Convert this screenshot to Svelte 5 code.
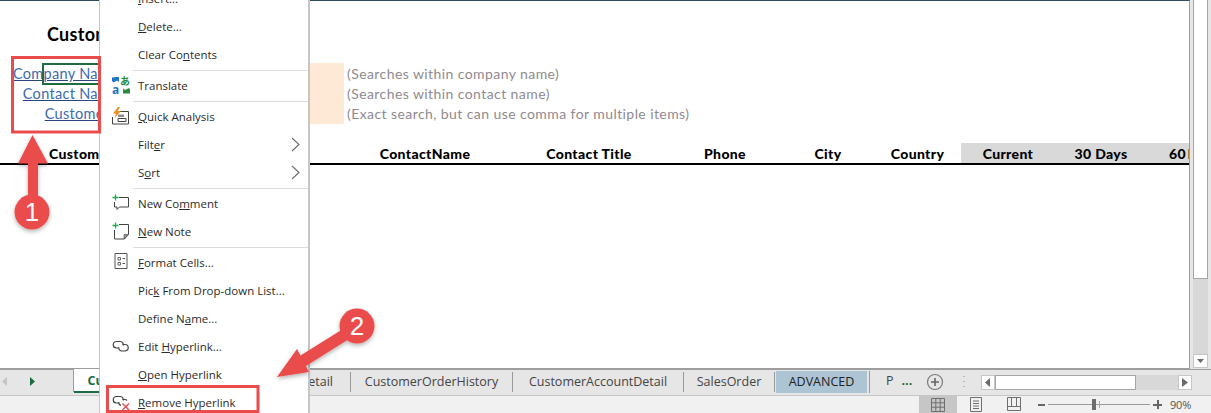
<script>
  const notes = [
    ['Company Name', '(Searches within company name)'],
    ['Contact Name', '(Searches within contact name)'],
    ['Customer#', '(Exact search, but can use comma for multiple items)']
  ];
  const heads = ['CustomerID', 'ContactName', 'Contact Title', 'Phone', 'City', 'Country'];
  const aged = ['Current', '30 Days', '60 Days'];
</script>

<div class="app">
  <main class="sheet">
    <h1 class="title">Customer Search</h1>
    <section class="filters">
      {#each notes as n, i}
        <a class="label" href="#top">{n[0]}</a>
        {#if i === 0}<div class="peach"></div>{/if}
        <span class="note">{n[1]}</span>
      {/each}
      <div class="selected"></div>
    </section>
    <section class="head">
      {#each heads as h}<b>{h}</b>{/each}
      {#each aged as h}<b class="aged">{h}</b>{/each}
    </section>
  </main>

  <aside class="vscroll">
    <div class="vthumb"></div>
    <div class="vtrack"></div>
    <div class="vbtn"><svg width="9" height="6" viewBox="0 0 9 6"><path d="M1 1h7L4.500 5z" fill="#6a6a6a"/></svg></div>
  </aside>

  <nav class="tabs">
    <div class="nav">
      <svg width="74" height="22" viewBox="0 0 74 22"><path d="M7 7v9L2 11.500z" fill="#c4c4c4"/><path d="M30 7v9l5-4.500z" fill="#1d6b41"/></svg>
    </div>
    <div class="tab active">CustomerSearch</div>
    <div class="tab detail">CustomerDetail</div>
    <div class="tab">CustomerOrderHistory</div>
    <div class="tab">CustomerAccountDetail</div>
    <div class="tab">SalesOrder</div>
    <div class="tab adv"><span>ADVANCED</span></div>
    <div class="more"><span>P</span><b>...</b></div>
    <div class="add">
      <svg width="18" height="18" viewBox="0 0 18 18"><circle cx="9" cy="9" r="7.500" fill="none" stroke="#7a7a7a" stroke-width="1.200"/><path d="M9 5v8M5 9h8" stroke="#666" stroke-width="1.600"/></svg>
    </div>
    <div class="dots">
      <svg width="3" height="14" viewBox="0 0 3 14"><path d="M1 1v1M1 6v1M1 11v1" stroke="#aaa" stroke-width="1.500"/></svg>
    </div>
    <div class="hscroll">
      <div class="hbtn"><svg width="6" height="9" viewBox="0 0 6 9"><path d="M5 0v9L0 4.500z" fill="#6a6a6a"/></svg></div>
      <div class="hthumb"></div>
      <div class="htrack"></div>
      <div class="hbtn"><svg width="6" height="9" viewBox="0 0 6 9"><path d="M0 0v9l6-4.500z" fill="#6a6a6a"/></svg></div>
    </div>
  </nav>

  <footer class="status">
    <div class="view on">
      <svg width="14" height="14" viewBox="0 0 14 14"><path d="M.5.500h13v13H.5zM.5 4.800h13M.5 9.200h13M4.800.500v13M9.200.500v13" fill="none" stroke="#6f6f6f"/></svg>
    </div>
    <div class="view">
      <svg width="14" height="15" viewBox="0 0 14 15"><path d="M1.500.500h11v14h-11zM4 4h6M4 6.500h6M4 9h6M4 11.500h6" fill="none" stroke="#6f6f6f"/></svg>
    </div>
    <div class="view">
      <svg width="14" height="15" viewBox="0 0 14 15"><path d="M.5.500h13v13H.5zM.5 9.500h13M4.500.500v9M9.500.500v9" fill="none" stroke="#6f6f6f"/></svg>
    </div>
    <div class="zoom">
      <span class="minus"></span>
      <div class="slider"><i class="tick"></i><i class="knob"></i></div>
      <span class="plus"></span>
      <span class="pct">90%</span>
    </div>
  </footer>

  <div class="menu">
    <div class="row"><span class="ic"></span><span><u>I</u>nsert...</span></div>
    <div class="row"><span class="ic"></span><span><u>D</u>elete...</span></div>
    <div class="row"><span class="ic"></span><span>Clear Co<u>n</u>tents</span></div>
    <hr />
    <div class="row">
      <span class="ic">
        <svg width="18" height="18" viewBox="0 0 18 18">
          <path d="M0 1.500L4.500 1 7 1v5L5 4.500 1.500 6.500 0 5z" fill="#1f74c4"/>
          <text x="0" y="17.500" class="gl blue">a</text>
          <text x="8" y="9" class="gl green">あ</text>
          <path d="M18 17.500h-7v-5l2 1.500 4-2 1 1.500z" fill="#2b8a3e"/>
        </svg>
      </span>
      <span>Translate</span>
    </div>
    <hr />
    <div class="row">
      <span class="ic">
        <svg width="18" height="18" viewBox="0 0 18 18">
          <path d="M5 4.500h11.500v12.500H.5v-7" fill="none" stroke="#444"/>
          <path d="M6 11.500h8v3H6z" fill="none" stroke="#444"/>
          <path d="M6 7.500h6v2.500H6z" fill="#8f8f8f"/>
          <path d="M6 0L1 6.500h3L2.500 11 9 4H5.500L8 0z" fill="#f08a24"/>
        </svg>
      </span>
      <span><u>Q</u>uick Analysis</span>
    </div>
    <div class="row"><span class="ic"></span><span>Filt<u>e</u>r</span>
      <svg class="chev" width="9" height="15" viewBox="0 0 9 15"><path d="M1 1l7 6.500L1 14" fill="none" stroke="#6a6a6a" stroke-width="1.100"/></svg>
    </div>
    <div class="row"><span class="ic"></span><span>S<u>o</u>rt</span>
      <svg class="chev" width="9" height="15" viewBox="0 0 9 15"><path d="M1 1l7 6.500L1 14" fill="none" stroke="#6a6a6a" stroke-width="1.100"/></svg>
    </div>
    <hr />
    <div class="row">
      <span class="ic">
        <svg width="18" height="18" viewBox="0 0 18 18">
          <path d="M7 3.500h9.500v9.500H7.500L5 15.500V13H2.500V8" fill="none" stroke="#444"/>
          <path d="M3.500 .500v6M.5 3.500h6" stroke="#19b04a" stroke-width="1.300"/>
        </svg>
      </span>
      <span>New Co<u>m</u>ment</span>
    </div>
    <div class="row">
      <span class="ic">
        <svg width="18" height="18" viewBox="0 0 18 18">
          <path d="M7 2.500h9.500v10l-4 4.500h-10V8" fill="none" stroke="#444"/>
          <path d="M12 17v-4.500h4.500z" fill="#999" stroke="#444" stroke-width=".6"/>
          <path d="M3.500 .500v6M.5 3.500h6" stroke="#19b04a" stroke-width="1.300"/>
        </svg>
      </span>
      <span><u>N</u>ew Note</span>
    </div>
    <hr />
    <div class="row">
      <span class="ic">
        <svg width="18" height="18" viewBox="0 0 18 18">
          <path d="M3 .500h12v15H3z" fill="none" stroke="#555"/>
          <path d="M6 4.500h2.500V7H6zM6 9.500h2.500V12H6z" fill="none" stroke="#555" stroke-width=".9"/>
          <path d="M10.500 5.500h2.500M10.500 10.500h2.500" stroke="#555"/>
        </svg>
      </span>
      <span><u>F</u>ormat Cells...</span>
    </div>
    <div class="row"><span class="ic"></span><span>Pic<u>k</u> From Drop-down List...</span></div>
    <div class="row"><span class="ic"></span><span>Define N<u>a</u>me...</span></div>
    <div class="row">
      <span class="ic">
        <svg width="18" height="18" viewBox="0 0 18 18">
          <path d="M6.500 11H4.500a3.250 3.250 0 0 1 0-6.500h4a3.250 3.250 0 0 1 2.700 4" fill="none" stroke="#444" stroke-width="1.200"/>
          <path d="M10.500 7.500h2.500a3.250 3.250 0 0 1 0 6.500H9.500a3.250 3.250 0 0 1-2.700-4" fill="none" stroke="#444" stroke-width="1.200"/>
        </svg>
      </span>
      <span>Edit <u>H</u>yperlink...</span>
    </div>
    <div class="row"><span class="ic"></span><span><u>O</u>pen Hyperlink</span></div>
    <div class="row">
      <span class="ic">
        <svg width="18" height="18" viewBox="0 0 18 18">
          <path d="M6.500 10H4.500a3.250 3.250 0 0 1 0-6.500h4a3.250 3.250 0 0 1 2.700 4" fill="none" stroke="#444" stroke-width="1.200"/>
          <path d="M10.500 6.500h2.500a3 3 0 0 1 2 1M9 12.500a3.250 3.250 0 0 1-2.200-3.500" fill="none" stroke="#444" stroke-width="1.200"/>
          <path d="M10.500 10.500l6.500 6.500M17 10.500l-6.500 6.500" stroke="#e5484d" stroke-width="1.400"/>
        </svg>
      </span>
      <span><u>R</u>emove Hyperlink</span>
    </div>
  </div>

  <svg class="marks" width="1211" height="413" viewBox="0 0 1211 413">
    <defs>
      <filter id="sh" x="-30%" y="-30%" width="170%" height="170%">
        <feDropShadow dx="0" dy="2" stdDeviation="2" flood-color="#000" flood-opacity=".3"/>
      </filter>
    </defs>
    <rect x="12.500" y="57.500" width="87" height="74.500" fill="none" stroke="#ea4c4c" stroke-width="3"/>
    <rect x="107.500" y="386.500" width="150.500" height="25" fill="none" stroke="#ea4c4c" stroke-width="3"/>
    <g filter="url(#sh)">
      <path d="M32.500 135L48 163.500H38V205H28V163.500H18z" fill="#ea4c4c"/>
      <circle cx="32" cy="212" r="17.500" fill="#ea4c4c"/>
    </g>
    <g filter="url(#sh)">
      <path d="M277 377L297 349L300.500 355.500L343 329L349 339L306 366L309 372z" fill="#ea4c4c"/>
      <circle cx="357" cy="326" r="17.500" fill="#ea4c4c"/>
    </g>
    <text x="32" y="221" class="num">1</text>
    <text x="357" y="335" class="num">2</text>
  </svg>
</div>

<style>
  :global(body) { margin: 0; background: #fff; }
  .app {
    position: relative;
    width: 1211px;
    height: 413px;
    overflow: hidden;
    display: grid;
    grid-template-columns: 1190px 21px;
    grid-template-rows: 369px 26px 18px;
    font-family: "Open Sans", sans-serif;
  }
  .sheet {
    border-top: 1px solid #2f4c5c;
    border-right: 1px solid #9d9d9d;
    border-bottom: 1px solid #9d9d9d;
    box-sizing: border-box;
    overflow: hidden;
    font-family: Lato, sans-serif;
  }
  .title {
    margin: 0;
    padding: 23px 0 0 47px;
    height: 39px;
    font-size: 18px;
    line-height: 20px;
    letter-spacing: .3px;
    font-weight: 700;
    color: #000;
    white-space: nowrap;
  }
  .filters {
    position: relative;
    display: grid;
    grid-template-columns: 118px 226px 1fr;
    grid-template-rows: 21px 20px 20px;
    height: 61px;
  }
  .label {
    grid-column: 1;
    justify-self: end;
    align-self: end;
    white-space: nowrap;
    font-size: 14.500px;
    line-height: 20px;
    letter-spacing: .3px;
    color: #3b6bb0;
    text-decoration-color: #27457f;
  }
  .peach {
    grid-column: 2;
    grid-row: 1 / span 3;
    background: #fde9d5;
  }
  .note {
    grid-column: 3;
    align-self: end;
    padding-left: 3px;
    font-size: 14px;
    line-height: 20px;
    letter-spacing: .42px;
    color: #8f8a8f;
    white-space: nowrap;
  }
  .selected {
    position: absolute;
    left: 42px;
    top: 0;
    width: 70px;
    height: 18px;
    border: 2px solid #1f6b42;
  }
  .head {
    display: grid;
    grid-template-columns: 340px 170px 158px 114px 92px 87px 94px 92px 42px;
    margin-top: 19px;
    height: 20px;
    border-bottom: 2px solid #000;
    font-size: 14px;
    line-height: 22px;
    letter-spacing: .35px;
    color: #000;
    white-space: nowrap;
  }
  .head b {
    font-weight: 900;
    text-align: center;
    overflow: hidden;
  }
  .head b:first-child { text-align: left; padding-left: 49px; }
  .head .aged { background: #d9d9d9; }
  .head .aged:last-child { text-align: left; padding-left: 22px; word-spacing: -2px; }

  .vscroll {
    grid-row: 1;
    grid-column: 2;
    display: flex;
    flex-direction: column;
    background: #e6e6e6;
    padding: 0 3px 1px 3px;
  }
  .vthumb {
    height: 279px;
    background: #fff;
    border: solid #a6a6a6;
    border-width: 0 1px 1px;
    box-sizing: border-box;
  }
  .vtrack { flex: 1; background: #d8d8d8; }
  .vbtn {
    height: 14px;
    background: #fff;
    border: 1px solid #c6c6c6;
    box-sizing: border-box;
    display: flex;
    align-items: center;
    justify-content: center;
  }

  .tabs {
    grid-row: 2;
    grid-column: 1 / span 2;
    display: grid;
    grid-template-columns: 74px 130px 147px 162px 171px 91px 95px 56px 34px 21px 1fr;
    background: #e6e6e6;
    border-top: 1px solid #9d9d9d;
    box-sizing: border-box;
    font-size: 12.500px;
    color: #444;
    white-space: nowrap;
  }
  .nav { border-right: 1px solid #9d9d9d; height: 22px; }
  .nav svg { display: block; }
  .tab {
    text-align: center;
    height: 20px;
    margin-top: 2px;
    line-height: 20px;
    border-right: 1px solid #9a9a9a;
  }
  .detail { text-align: right; padding-right: 17px; }
  .active {
    height: 24px;
    margin-top: -1px;
    line-height: 24px;
    background: #fff;
    border-right: 0;
    border-bottom: 2px solid #1d6b41;
    color: #1d6b41;
    font-weight: 700;
    box-sizing: border-box;
  }
  .adv { height: 22px; margin-top: 1px; line-height: 22px; }
  .adv span {
    display: block;
    margin: 0 2px 0 1px;
    background: #acc4d3;
    color: #222;
  }
  .more { display: flex; gap: 8px; padding-left: 16px; line-height: 22px; }
  .more b { color: #1d6b41; }
  .add { display: flex; align-items: center; height: 24px; }
  .dots { display: flex; align-items: center; height: 24px; padding-left: 3px; }
  .hscroll {
    display: flex;
    height: 15px;
    margin-top: 5px;
    margin-right: 19px;
    background: #d8d8d8;
  }
  .hbtn {
    width: 14px;
    background: #fff;
    border: 1px solid #c6c6c6;
    box-sizing: border-box;
    display: flex;
    align-items: center;
    justify-content: center;
  }
  .hthumb { width: 141px; background: #fff; border: 1px solid #a6a6a6; box-sizing: border-box; }
  .htrack { flex: 1; }

  .status {
    grid-row: 3;
    grid-column: 1 / span 2;
    display: flex;
    justify-content: flex-end;
    background: #f1f1f1;
    border-top: 1px solid #c6c6c6;
    box-sizing: border-box;
    padding-right: 19px;
  }
  .view {
    width: 38px;
    display: flex;
    align-items: center;
    justify-content: center;
    flex: none;
  }
  .view.on { background: #c6c6c6; }
  .zoom {
    display: flex;
    align-items: center;
    margin-left: 5px;
    width: 154px;
    flex: none;
  }
  .minus { width: 7px; height: 2px; background: #666; flex: none; }
  .slider { position: relative; width: 102px; height: 1px; background: #9b9b9b; margin: 0 3px; flex: none; }
  .knob { position: absolute; left: 44px; top: -5px; width: 4px; height: 11px; background: #6d6d6d; }
  .tick { position: absolute; left: 51px; top: -3px; width: 1px; height: 7px; background: #aaa; }
  .plus {
    width: 9px; height: 9px; flex: none;
    background: linear-gradient(#666, #666) center/9px 2px no-repeat, linear-gradient(#666, #666) center/2px 9px no-repeat;
  }
  .pct { margin-left: 8px; font-size: 11px; color: #555; letter-spacing: -.2px; }

  .menu {
    position: absolute;
    left: 99px;
    top: -16px;
    width: 211px;
    height: 440px;
    background: #fff;
    border: solid #c6c6c6;
    border-width: 0 2px 0 1px;
    box-sizing: border-box;
    font-size: 11.500px;
    color: #2b2b2b;
  }
  .menu hr {
    margin: 2px 0 0 33px;
    border: 0;
    height: 1px;
    background: #dcdcdc;
  }
  .row {
    display: flex;
    align-items: center;
    height: 28px;
    position: relative;
    white-space: nowrap;
  }
  .ic {
    width: 38px;
    padding-left: 12px;
    box-sizing: border-box;
    display: flex;
    flex: none;
  }
  .chev { position: absolute; right: 8px; top: 7px; }
  .gl { font-family: "Noto Sans CJK JP", "Open Sans", sans-serif; font-weight: 700; }
  .blue { font-size: 12px; fill: #1f74c4; font-family: "Open Sans", sans-serif; }
  .green { font-size: 10px; fill: #2b8a3e; }

  .marks { position: absolute; left: 0; top: 0; pointer-events: none; }
  .num {
    font-family: "Liberation Sans", sans-serif;
    font-size: 26px;
    fill: #fff;
    text-anchor: middle;
  }
</style>
